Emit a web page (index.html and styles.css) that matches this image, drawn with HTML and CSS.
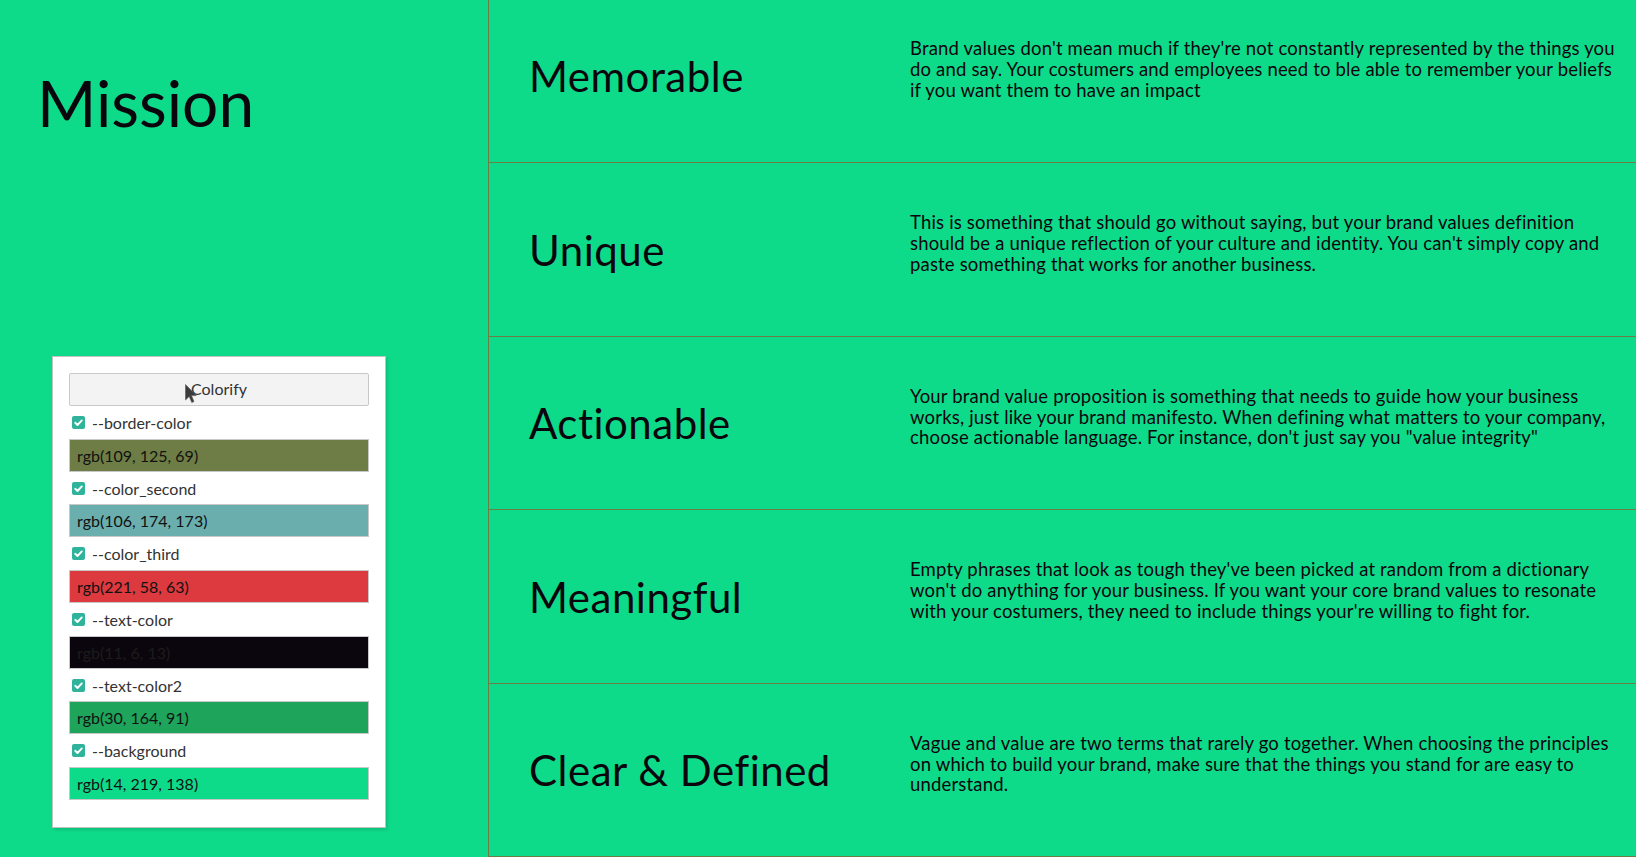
FILE: index.html
```html
<!DOCTYPE html>
<html lang="en">
<head>
<meta charset="utf-8">
<title>Mission</title>
<link rel="stylesheet" href="styles.css">
</head>
<body>
<div class="page">
  <aside class="mission">
    <h1 class="mission-title">Mission</h1>
    <div class="colorify">
      <button class="colorify-btn" type="button">Colorify</button>
      <div class="var">
        <label class="var-label"><span class="check"><svg viewBox="0 0 13 13" width="13" height="13"><path d="M3.2 6.8 L5.5 9 L9.8 4.4" fill="none" stroke="#fff" stroke-width="1.9" stroke-linecap="round" stroke-linejoin="round"/></svg></span>--border-color</label>
        <div class="var-field sw-border">rgb(109, 125, 69)</div>
      </div>
      <div class="var">
        <label class="var-label"><span class="check"><svg viewBox="0 0 13 13" width="13" height="13"><path d="M3.2 6.8 L5.5 9 L9.8 4.4" fill="none" stroke="#fff" stroke-width="1.9" stroke-linecap="round" stroke-linejoin="round"/></svg></span>--color_second</label>
        <div class="var-field sw-second">rgb(106, 174, 173)</div>
      </div>
      <div class="var">
        <label class="var-label"><span class="check"><svg viewBox="0 0 13 13" width="13" height="13"><path d="M3.2 6.8 L5.5 9 L9.8 4.4" fill="none" stroke="#fff" stroke-width="1.9" stroke-linecap="round" stroke-linejoin="round"/></svg></span>--color_third</label>
        <div class="var-field sw-third">rgb(221, 58, 63)</div>
      </div>
      <div class="var">
        <label class="var-label"><span class="check"><svg viewBox="0 0 13 13" width="13" height="13"><path d="M3.2 6.8 L5.5 9 L9.8 4.4" fill="none" stroke="#fff" stroke-width="1.9" stroke-linecap="round" stroke-linejoin="round"/></svg></span>--text-color</label>
        <div class="var-field sw-text">rgb(11, 6, 13)</div>
      </div>
      <div class="var">
        <label class="var-label"><span class="check"><svg viewBox="0 0 13 13" width="13" height="13"><path d="M3.2 6.8 L5.5 9 L9.8 4.4" fill="none" stroke="#fff" stroke-width="1.9" stroke-linecap="round" stroke-linejoin="round"/></svg></span>--text-color2</label>
        <div class="var-field sw-text2">rgb(30, 164, 91)</div>
      </div>
      <div class="var">
        <label class="var-label"><span class="check"><svg viewBox="0 0 13 13" width="13" height="13"><path d="M3.2 6.8 L5.5 9 L9.8 4.4" fill="none" stroke="#fff" stroke-width="1.9" stroke-linecap="round" stroke-linejoin="round"/></svg></span>--background</label>
        <div class="var-field sw-bg">rgb(14, 219, 138)</div>
      </div>
    </div>
    <svg class="cursor" viewBox="0 0 12 20" width="12" height="20"><path d="M0.5 0.5 L0.5 16 L4.2 12.4 L6.8 18.6 L9 17.6 L6.5 11.6 L11.3 11.6 Z" fill="#3b3b3b" stroke="#5a5a5a" stroke-width="0.6"/></svg>
  </aside>
  <main class="values">
    <section class="value">
      <h2 class="value-title">Memorable</h2>
      <p class="value-text">Brand values don't mean much if they're not constantly represented by the things you do and say. Your costumers and employees need to ble able to remember your beliefs if you want them to have an impact</p>
    </section>
    <section class="value">
      <h2 class="value-title">Unique</h2>
      <p class="value-text">This is something that should go without saying, but your brand values definition should be a unique reflection of your culture and identity. You can't simply copy and paste something that works for another business.</p>
    </section>
    <section class="value">
      <h2 class="value-title">Actionable</h2>
      <p class="value-text">Your brand value proposition is something that needs to guide how your business works, just like your brand manifesto. When defining what matters to your company, choose actionable language. For instance, don't just say you "value integrity"</p>
    </section>
    <section class="value">
      <h2 class="value-title">Meaningful</h2>
      <p class="value-text">Empty phrases that look as tough they've been picked at random from a dictionary won't do anything for your business. If you want your core brand values to resonate with your costumers, they need to include things your're willing to fight for.</p>
    </section>
    <section class="value">
      <h2 class="value-title">Clear &amp; Defined</h2>
      <p class="value-text">Vague and value are two terms that rarely go together. When choosing the principles on which to build your brand, make sure that the things you stand for are easy to understand.</p>
    </section>
  </main>
</div>
</body>
</html>
```

FILE: styles.css
```css
* { box-sizing: border-box; }

html, body {
  margin: 0;
  padding: 0;
  height: 100%;
  overflow: hidden;
}

body {
  background: rgb(14, 219, 138);
  color: rgb(11, 6, 13);
  font-family: Lato, "Open Sans", sans-serif;
}

.page {
  display: grid;
  grid-template-columns: 489px 1fr;
  height: 857px;
}

/* ---------- left column ---------- */
.mission {
  position: relative;
  border-right: 1px solid rgb(109, 125, 69);
  display: flex;
  flex-direction: column;
  align-items: flex-start;
}

.mission-title {
  margin: 71px 0 0 37px;
  font-size: 64px;
  line-height: 1;
  font-weight: 400;
}

.colorify {
  margin: 221px 0 0 52px;
  width: 334px;
  background: #fff;
  border: 1px solid #c2c2c2;
  padding: 16px 16px 27px;
  box-shadow: 2px 2px 3px rgba(0, 0, 0, 0.12);
  font-size: 16px;
}

.colorify-btn {
  display: block;
  width: 100%;
  height: 33px;
  background: #f3f3f3;
  border: 1px solid #c9c9c9;
  border-radius: 2px;
  font: inherit;
  font-size: 16px;
  color: #333;
  padding: 0 0 3px;
}

.var-label {
  display: flex;
  align-items: center;
  height: 32.7px;
  padding-left: 3px;
  color: #333;
  gap: 7px;
}

.check {
  width: 13px;
  height: 13px;
  border-radius: 2px;
  background: #2fb49b;
  display: flex;
}

.var-field {
  height: 33px;
  border: 1px solid #c8c8c8;
  padding: 0 7px;
  line-height: 31px;
  color: #111;
}

.sw-border { background: rgb(109, 125, 69); }
.sw-second { background: rgb(106, 174, 173); }
.sw-third { background: rgb(221, 58, 63); }
.sw-text { background: rgb(11, 6, 13); color: #1c1c1c; }
.sw-text2 { background: rgb(30, 164, 91); }
.sw-bg { background: rgb(14, 219, 138); }

.cursor {
  position: absolute;
  left: 185px;
  top: 384px;
}

/* ---------- right column ---------- */
.values {
  display: grid;
  grid-template-rows: 163px 174px 173px 174px 1fr;
}

.value {
  display: flex;
  align-items: center;
  border-bottom: 1px solid rgb(109, 125, 69);
  padding: 0 18px 0 40px;
}

.value:first-child {
  padding-bottom: 11px;
}

.value-title {
  flex: none;
  width: 381px;
  margin: 0;
  font-size: 42px;
  letter-spacing: 0.5px;
  font-weight: 400;
}

.value-text {
  flex: 1;
  margin: 0 0 12px;
  font-size: 18.5px;
  letter-spacing: 0.17px;
  line-height: 20.7px;
}
```
